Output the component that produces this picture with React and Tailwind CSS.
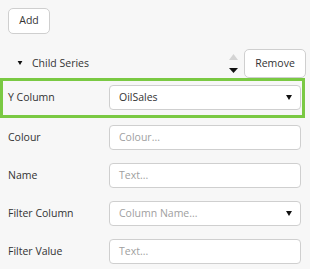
import React from "react";

function Caret({ w = 6, h = 5 }) {
  return (
    <svg width={w} height={h} viewBox="0 0 6 5">
      <path d="M0 0h6L3 5z" fill="#111" />
    </svg>
  );
}

function TextField({ placeholder, value }) {
  return (
    <div className="h-[25px] w-[192px] rounded-[4px] border border-[#cfcfcf] bg-white px-[9px] flex items-center text-[10.5px]">
      {value ? (
        <span className="text-[#333]">{value}</span>
      ) : (
        <span className="text-[#a0a0a0]">{placeholder}</span>
      )}
    </div>
  );
}

function SelectField({ placeholder, value }) {
  return (
    <div className="h-[25px] w-[192px] rounded-[4px] border border-[#cfcfcf] bg-white pl-[9px] pr-[8px] flex items-center justify-between text-[10.5px]">
      {value ? (
        <span className="text-[#333]">{value}</span>
      ) : (
        <span className="text-[#a0a0a0]">{placeholder}</span>
      )}
      <Caret />
    </div>
  );
}

function Row({ label, children }) {
  return (
    <div className="flex items-center h-[25px]">
      <div className="w-[109px] pl-[8px] text-[10.5px] text-[#333]">{label}</div>
      {children}
    </div>
  );
}

export default function App() {
  return (
    <div
      className="w-[310px] h-[269px] bg-[#f7f7f7] overflow-hidden"
      style={{ fontFamily: '"Open Sans", "Liberation Sans", sans-serif' }}
    >
      {/* Add */}
      <div className="pt-[6px] pl-[8px]">
        <button className="h-[26px] w-[42px] rounded-[5px] border border-[#cfcfcf] bg-white text-[10.5px] text-[#333]">
          Add
        </button>
      </div>

      {/* Child series header */}
      <div className="mt-[15px] flex items-center h-[29px]">
        <div className="flex items-center pl-[17px] flex-1">
          <Caret w={6} h={4} />
          <span className="ml-[9px] text-[10.5px] text-[#333]">Child Series</span>
        </div>
        <div className="flex flex-col items-center gap-[8px] mr-[6px]">
          <svg width="9" height="6" viewBox="0 0 9 6">
            <path d="M0 6h9L4.5 0z" fill="#d4d4d4" />
          </svg>
          <svg width="9" height="5" viewBox="0 0 9 5">
            <path d="M0 0h9L4.5 5z" fill="#111" />
          </svg>
        </div>
        <button className="h-[29px] w-[62px] mr-[4px] rounded-[5px] border border-[#cfcfcf] bg-white text-[10.5px] text-[#333]">
          Remove
        </button>
      </div>

      {/* Y Column highlighted */}
      <div className="w-[305px] h-[40px] border-[3px] border-[#7ac943] flex items-center">
        <div className="w-[106px] pl-[5px] text-[10.5px] text-[#333]">Y Column</div>
        <SelectField value="OilSales" />
      </div>

      <div className="mt-[7px] flex flex-col gap-[13px]">
        <Row label="Colour">
          <TextField placeholder="Colour..." />
        </Row>
        <Row label="Name">
          <TextField placeholder="Text..." />
        </Row>
        <Row label="Filter Column">
          <SelectField placeholder="Column Name..." />
        </Row>
        <Row label="Filter Value">
          <TextField placeholder="Text..." />
        </Row>
      </div>
    </div>
  );
}
